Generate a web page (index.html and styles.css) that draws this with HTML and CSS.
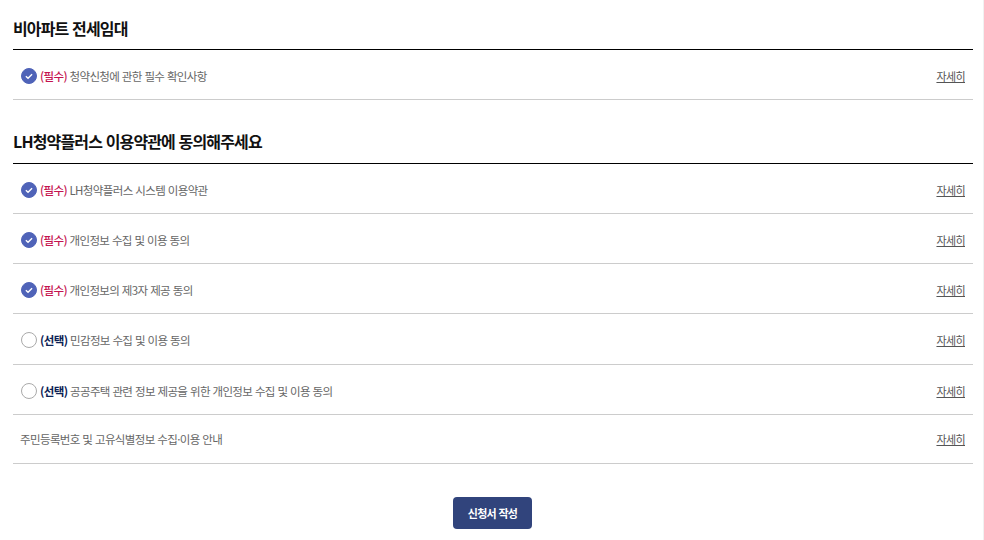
FILE: index.html
```html
<!DOCTYPE html>
<html lang="ko">
    <head>
        <title>청약 약관 동의</title>
        <link rel="stylesheet" href="styles.css">
    </head>
    <body>
        <div id="wrap">
            <h2 class="title">비아파트 전세임대</h2>
            <ul class="terms">
                <li class="row">
                    <span class="check on"><svg viewBox="0 0 16 16"><path d="M4.4 8.3l2.5 2.3 4.6-4.6"/></svg></span>
                    <span class="label"><b class="need">(필수)</b> 청약신청에 관한 필수 확인사항</span>
                    <a class="more" href="#">자세히</a>
                </li>
            </ul>

            <h2 class="title second">LH청약플러스 이용약관에 동의해주세요</h2>
            <ul class="terms">
                <li class="row">
                    <span class="check on"><svg viewBox="0 0 16 16"><path d="M4.4 8.3l2.5 2.3 4.6-4.6"/></svg></span>
                    <span class="label"><b class="need">(필수)</b> LH청약플러스 시스템 이용약관</span>
                    <a class="more" href="#">자세히</a>
                </li>
                <li class="row">
                    <span class="check on"><svg viewBox="0 0 16 16"><path d="M4.4 8.3l2.5 2.3 4.6-4.6"/></svg></span>
                    <span class="label"><b class="need">(필수)</b> 개인정보 수집 및 이용 동의</span>
                    <a class="more" href="#">자세히</a>
                </li>
                <li class="row">
                    <span class="check on"><svg viewBox="0 0 16 16"><path d="M4.4 8.3l2.5 2.3 4.6-4.6"/></svg></span>
                    <span class="label"><b class="need">(필수)</b> 개인정보의 제3자 제공 동의</span>
                    <a class="more" href="#">자세히</a>
                </li>
                <li class="row tall">
                    <span class="check"></span>
                    <span class="label"><b class="option">(선택)</b> 민감정보 수집 및 이용 동의</span>
                    <a class="more" href="#">자세히</a>
                </li>
                <li class="row">
                    <span class="check"></span>
                    <span class="label"><b class="option">(선택)</b> 공공주택 관련 정보 제공을 위한 개인정보 수집 및 이용 동의</span>
                    <a class="more" href="#">자세히</a>
                </li>
                <li class="row short">
                    <span class="label">주민등록번호 및 고유식별정보 수집·이용 안내</span>
                    <a class="more" href="#">자세히</a>
                </li>
            </ul>

            <div class="actions">
                <a class="button" href="#">신청서 작성</a>
            </div>
        </div>
        <div id="scrollbar"></div>
    </body>
</html>
```

FILE: styles.css
```css
html, body {
    height: 100%;
}

body {
    margin: 0;
    overflow: hidden;
    background: #fff;
    font-family: "Noto Sans CJK KR", "Noto Sans", sans-serif;
    color: #555;
}

#wrap {
    width: 960px;
    padding: 16px 0 0 13px;
}

/*Section headings*/
.title {
    margin: 0;
    height: 33px;
    border-bottom: 1px solid #000;
    font-size: 16px;
    line-height: 24px;
    font-weight: 700;
    letter-spacing: -0.85px;
    color: #111;
}

.second {
    margin-top: 29px;
    height: 34px;
}

/*Agreement rows*/
.terms {
    margin: 0;
    padding: 0;
    list-style: none;
}

.row {
    display: flex;
    align-items: center;
    height: 47px;
    padding: 2px 8px 0 7px;
    border-bottom: 1px solid #ccc;
    font-size: 11.5px;
    letter-spacing: -0.62px;
    white-space: pre;
}

.tall {
    height: 48px;
}

.short {
    height: 48px;
    padding-top: 0;
}

.check {
    width: 14px;
    height: 14px;
    margin: 0 3px 0 1px;
    border: 1px solid #aaa;
    border-radius: 50%;
}

.check.on {
    background: #4f63b8;
    border-color: #4f63b8;
}

.check svg {
    display: block;
    width: 14px;
    height: 14px;
}

.check path {
    fill: none;
    stroke: #fff;
    stroke-width: 1.6;
}

.need {
    color: #c4134f;
    font-weight: 500;
}

.option {
    color: #0b2254;
    font-weight: 700;
}

.label {
    color: #666;
}

.more {
    margin-left: auto;
    color: #555;
    font-size: 11px;
    letter-spacing: -0.6px;
}

/*Submit button*/
.actions {
    display: flex;
    justify-content: center;
    padding: 33px 1px 0 0;
}

.button {
    width: 79px;
    height: 32px;
    border-radius: 4px;
    background: #31447c;
    color: #fff;
    font-size: 11px;
    font-weight: 700;
    letter-spacing: -0.7px;
    line-height: 32px;
    text-align: center;
    text-decoration: none;
}

#scrollbar {
    position: absolute;
    top: 0;
    right: 0;
    width: 1px;
    height: 100%;
    background: #f1f1f1;
}
```
